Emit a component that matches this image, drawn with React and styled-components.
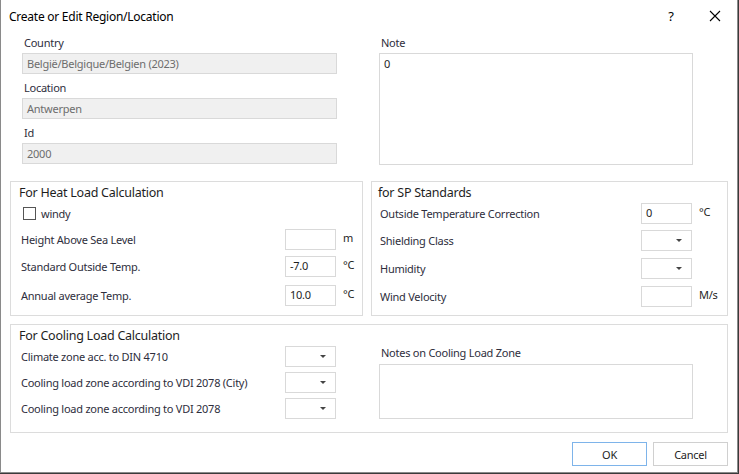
import React from "react";
import styled, { createGlobalStyle } from "styled-components";

const GlobalStyle = createGlobalStyle`
  html, body {
    margin: 0;
    padding: 0;
    background: #3a3a3a;
  }
  body {
    font-family: "Noto Sans", "Open Sans", sans-serif;
    font-size: 11px;
    letter-spacing: -0.25px;
    color: #2e2e3c;
  }
`;

const Window = styled.div`
  width: 736px;
  height: 472px;
  background: #ffffff;
  border: 1px solid #8a8a8a;
  border-top: none;
  display: flex;
  flex-direction: column;
`;

const TitleBar = styled.div`
  height: 32px;
  display: flex;
  align-items: center;
  padding-left: 8px;
  color: #000;
  font-size: 12px;
`;

const TitleText = styled.div`
  flex: 1;
`;

const TitleButton = styled.div`
  width: 44px;
  display: flex;
  justify-content: center;
  align-items: center;
  font-size: 13px;
  color: #000;
`;

const Body = styled.div`
  display: flex;
  flex-direction: column;
  padding: 3px 9px 0 9px;
`;

const TopSection = styled.div`
  display: grid;
  grid-template-columns: 315px 314px;
  column-gap: 42px;
  padding-left: 12px;
`;

const Column = styled.div`
  display: flex;
  flex-direction: column;
  gap: 6px;
`;

const Field = styled.div`
  display: flex;
  flex-direction: column;
  gap: 3px;
`;

const Label = styled.div`
  line-height: 15px;
  padding-left: 2px;
  white-space: nowrap;
`;

const ReadOnlyBox = styled.div`
  height: 19px;
  border: 1px solid #d9d9d9;
  background: #f0f0f0;
  color: #6d6d6d;
  line-height: 19px;
  padding-left: 4px;
`;

const TextArea = styled.div`
  height: ${(p) => p.$h}px;
  border: 1px solid #d9d9d9;
  background: #fff;
  color: #1e1e1e;
  padding: 2px 4px;
  box-sizing: border-box;
`;

const GroupRow = styled.div`
  display: flex;
  gap: 8px;
  margin-top: 16px;
`;

const Group = styled.div`
  width: ${(p) => (p.$w ? `${p.$w}px` : "auto")};
  flex: ${(p) => (p.$grow ? "1" : "none")};
  box-sizing: border-box;
  height: ${(p) => p.$h}px;
  border: 1px solid #dcdcdc;
  padding: 2px 0 0 ${(p) => p.$pl}px;
  display: flex;
  flex-direction: column;
`;

const GroupTitle = styled.div`
  font-size: 12.5px;
  line-height: 17px;
  color: #1e1e1e;
  margin-left: -2px;
  margin-bottom: 1px;
`;

const Row = styled.div`
  display: flex;
  align-items: center;
  height: 21px;
  margin-top: ${(p) => p.$mt || 0}px;
`;

const RowLabel = styled.div`
  flex: 1;
  white-space: nowrap;
`;

const Input = styled.div`
  width: 51px;
  height: 21px;
  box-sizing: border-box;
  border: 1px solid #d9d9d9;
  padding: 1px 4px;
  line-height: 16px;
  color: #1e1e1e;
  display: flex;
  align-items: flex-start;
`;

const Select = styled(Input)`
  justify-content: flex-end;
  align-items: center;
  padding-right: 9px;
`;

const Caret = styled.div`
  width: 0;
  height: 0;
  border-left: 3px solid transparent;
  border-right: 3px solid transparent;
  border-top: 3px solid #444;
`;

const Unit = styled.div`
  width: ${(p) => p.$w}px;
  box-sizing: border-box;
  padding-left: 7px;
  align-self: flex-start;
  line-height: 17px;
  color: #1e1e1e;
`;

const CheckRow = styled.div`
  display: flex;
  align-items: center;
  gap: 5px;
  height: 21px;
  padding-left: 2px;
  margin-top: 1px;
`;

const CheckBox = styled.div`
  width: 11px;
  height: 11px;
  border: 1px solid #555;
  background: #fff;
`;

const CoolingGroup = styled(Group)`
  margin-top: 8px;
`;

const CoolingBody = styled.div`
  display: grid;
  grid-template-columns: 315px 314px;
  column-gap: 43px;
`;

const CoolingRows = styled.div`
  display: flex;
  flex-direction: column;
  gap: 5px;
  padding-top: 1px;
`;

const CoolingNotes = styled.div`
  display: flex;
  flex-direction: column;
  gap: 4px;
  padding-top: 0;
`;

const ButtonRow = styled.div`
  display: flex;
  justify-content: flex-end;
  gap: 6px;
  margin-top: 9px;
`;

const Button = styled.div`
  width: 75px;
  height: 24px;
  box-sizing: border-box;
  border: 1px solid ${(p) => (p.$primary ? "#7eb4ea" : "#d0d0d0")};
  display: flex;
  justify-content: center;
  align-items: center;
  color: #1e1e1e;
`;

const CloseIcon = () => (
  <svg width="12" height="12" viewBox="0 0 12 12">
    <path d="M1 1 L11 11 M11 1 L1 11" stroke="#000" strokeWidth="1.1" fill="none" />
  </svg>
);

export default function App() {
  return (
    <>
      <GlobalStyle />
      <Window>
        <TitleBar>
          <TitleText>Create or Edit Region/Location</TitleText>
          <TitleButton>?</TitleButton>
          <TitleButton>
            <CloseIcon />
          </TitleButton>
        </TitleBar>
        <Body>
          <TopSection>
            <Column>
              <Field>
                <Label>Country</Label>
                <ReadOnlyBox>België/Belgique/Belgien (2023)</ReadOnlyBox>
              </Field>
              <Field>
                <Label>Location</Label>
                <ReadOnlyBox>Antwerpen</ReadOnlyBox>
              </Field>
              <Field>
                <Label>Id</Label>
                <ReadOnlyBox>2000</ReadOnlyBox>
              </Field>
            </Column>
            <Column>
              <Field>
                <Label>Note</Label>
                <TextArea $h={112}>0</TextArea>
              </Field>
            </Column>
          </TopSection>

          <GroupRow>
            <Group $w={353} $h={135} $pl={10}>
              <GroupTitle>For Heat Load Calculation</GroupTitle>
              <CheckRow>
                <CheckBox />
                <span>windy</span>
              </CheckRow>
              <Row $mt={5}>
                <RowLabel>Height Above Sea Level</RowLabel>
                <Input />
                <Unit $w={26}>m</Unit>
              </Row>
              <Row $mt={6}>
                <RowLabel>Standard Outside Temp.</RowLabel>
                <Input>-7.0</Input>
                <Unit $w={26}>°C</Unit>
              </Row>
              <Row $mt={8}>
                <RowLabel>Annual average Temp.</RowLabel>
                <Input>10.0</Input>
                <Unit $w={26}>°C</Unit>
              </Row>
            </Group>
            <Group $grow $h={135} $pl={8}>
              <GroupTitle>for SP Standards</GroupTitle>
              <Row $mt={1}>
                <RowLabel>Outside Temperature Correction</RowLabel>
                <Input>0</Input>
                <Unit $w={35}>°C</Unit>
              </Row>
              <Row $mt={6}>
                <RowLabel>Shielding Class</RowLabel>
                <Select>
                  <Caret />
                </Select>
                <Unit $w={35} />
              </Row>
              <Row $mt={7}>
                <RowLabel>Humidity</RowLabel>
                <Select>
                  <Caret />
                </Select>
                <Unit $w={35} />
              </Row>
              <Row $mt={7}>
                <RowLabel>Wind Velocity</RowLabel>
                <Input />
                <Unit $w={35}>M/s</Unit>
              </Row>
            </Group>
          </GroupRow>

          <CoolingGroup $h={109} $pl={10}>
            <GroupTitle>For Cooling Load Calculation</GroupTitle>
            <CoolingBody>
              <CoolingRows>
                <Row>
                  <RowLabel>Climate zone acc. to DIN 4710</RowLabel>
                  <Select>
                    <Caret />
                  </Select>
                </Row>
                <Row>
                  <RowLabel>Cooling load zone according to VDI 2078 (City)</RowLabel>
                  <Select>
                    <Caret />
                  </Select>
                </Row>
                <Row>
                  <RowLabel>Cooling load zone according to VDI 2078</RowLabel>
                  <Select>
                    <Caret />
                  </Select>
                </Row>
              </CoolingRows>
              <CoolingNotes>
                <Label>Notes on Cooling Load Zone</Label>
                <TextArea $h={55} />
              </CoolingNotes>
            </CoolingBody>
          </CoolingGroup>

          <ButtonRow>
            <Button $primary>OK</Button>
            <Button>Cancel</Button>
          </ButtonRow>
        </Body>
      </Window>
    </>
  );
}
